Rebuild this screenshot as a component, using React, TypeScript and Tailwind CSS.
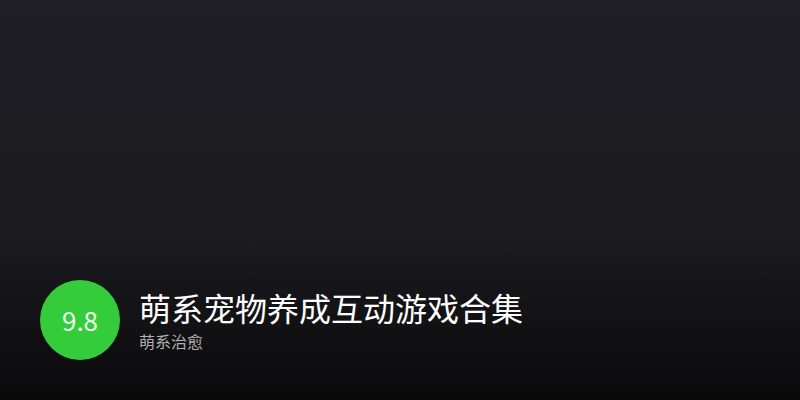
import React from 'react';

const App: React.FC = () => {
  return (
    <div
      className="w-[800px] h-[400px] flex flex-col justify-end bg-gradient-to-b from-[#1f1f25] via-[#1b1b20] via-60% to-[#0a0a0b]"
      style={{ fontFamily: '"Noto Sans CJK SC", "Noto Sans", sans-serif' }}
    >
      <div className="flex items-center gap-[19px] pl-10 pb-10">
        <div className="w-20 h-20 rounded-full bg-[#35cc3b] flex items-center justify-center shrink-0">
          <span className="text-[26px] leading-none text-[#eefaee]">9.8</span>
        </div>
        <div className="flex flex-col">
          <h1 className="text-[32px] leading-[38px] text-white font-normal">萌系宠物养成互动游戏合集</h1>
          <p className="mt-[4px] text-[16px] leading-[22px] text-[#b0b0b4]">萌系治愈</p>
        </div>
      </div>
    </div>
  );
};

export default App;
